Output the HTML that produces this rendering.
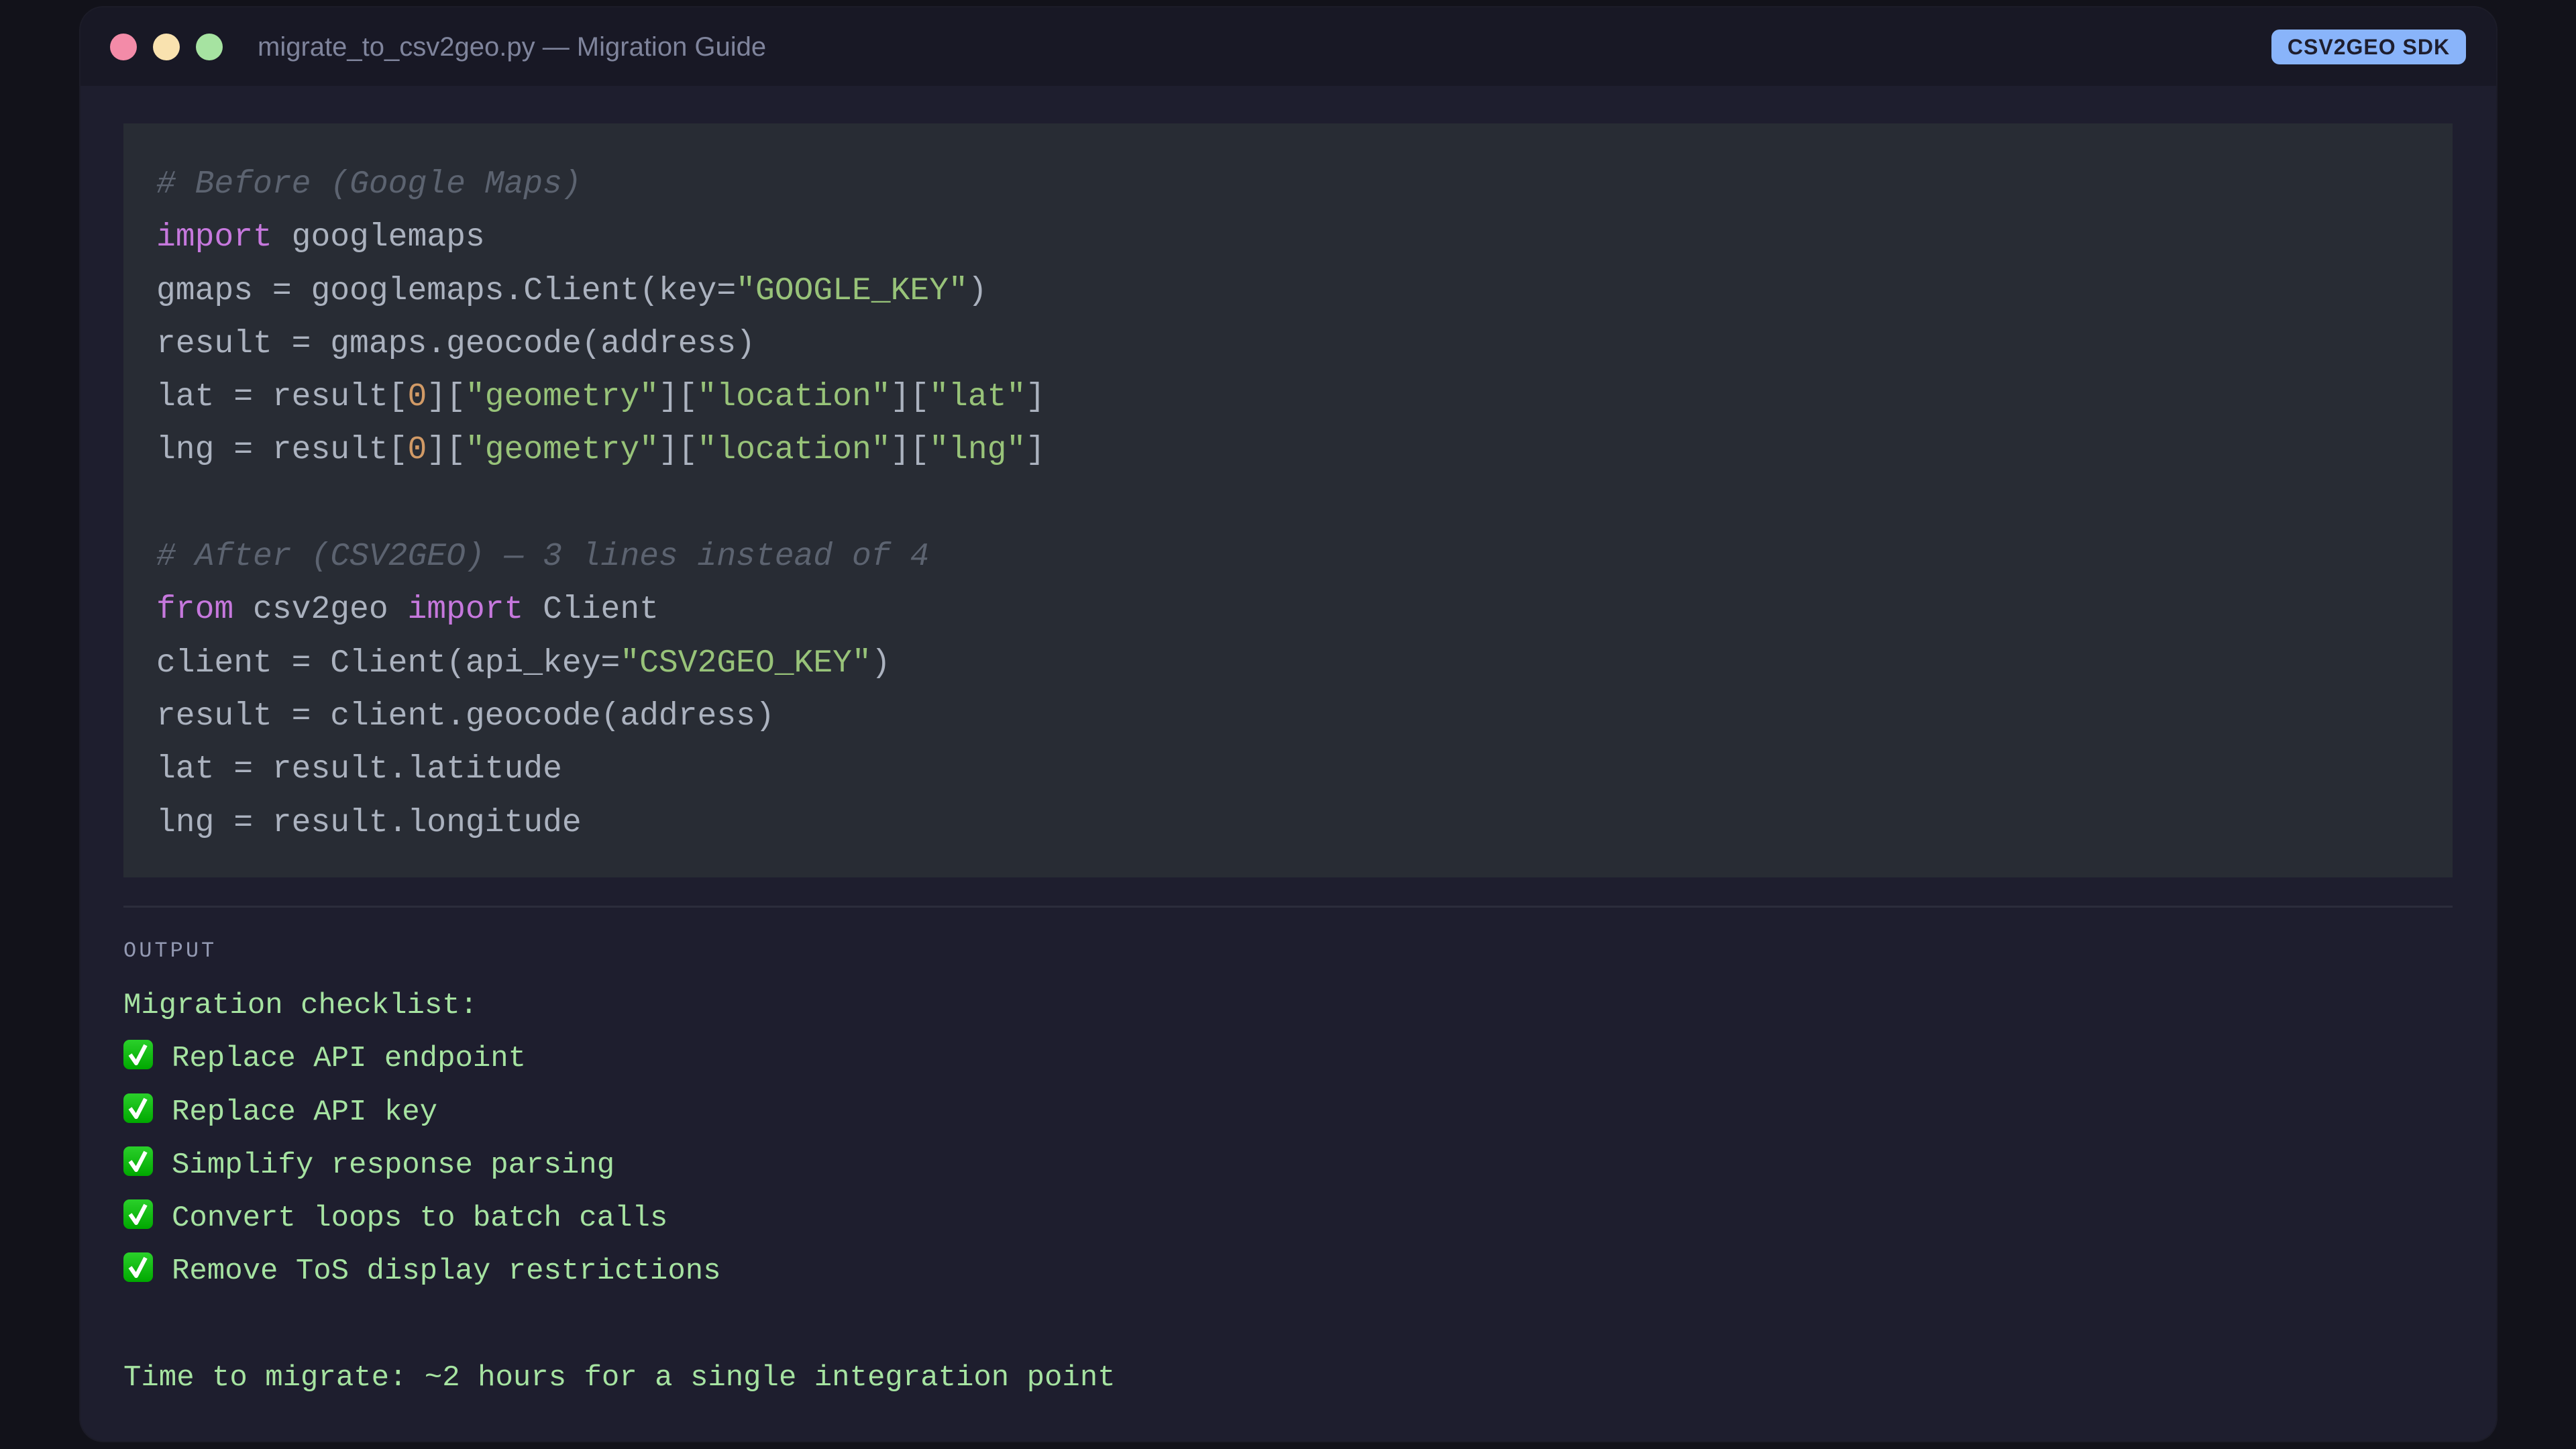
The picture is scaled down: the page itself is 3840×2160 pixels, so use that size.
<!DOCTYPE html>
<html><head><meta charset="utf-8"><style>
*{margin:0;padding:0;box-sizing:border-box}
html,body{width:3840px;height:2160px;overflow:hidden;background:#12121a}
.win{position:absolute;left:120px;top:11px;width:3601px;height:2137px;background:#1e1e2e;border-radius:34px;overflow:hidden;box-shadow:0 0 0 2px #1c1c28}
.hdr{position:absolute;left:0;top:0;width:100%;height:117px;background:#181825}
.dot{position:absolute;top:39px;width:40px;height:40px;border-radius:50%}
.title{position:absolute;left:264px;top:34px;font:40px "Liberation Sans",sans-serif;color:#7f849c;line-height:50px}
.badge{position:absolute;left:3266px;top:33px;width:290px;height:52px;background:#89b4fa;border-radius:12px;color:#1e1e2e;font:bold 32px "Liberation Sans",sans-serif;text-align:center;line-height:52px;letter-spacing:1px}
.code{position:absolute;left:64px;top:173px;width:3472px;height:1124px;background:#282c34;padding:52px 49px;font:48px/79.3px "Liberation Mono",monospace;color:#abb2bf;white-space:pre}
.c{color:#5c6370;font-style:italic}.k{color:#c678dd}.s{color:#98c379}.n{color:#d19a66}
.sep{position:absolute;left:64px;top:1339px;width:3472px;height:3px;background:#2c2d3c}
.olbl{position:absolute;left:64px;top:1388px;font:32px "Liberation Mono",monospace;color:#9399b2;letter-spacing:4px}
.out{position:absolute;left:64px;top:1449px;font:44px/79.3px "Liberation Mono",monospace;color:#a6e3a1;white-space:pre}
.ck{display:inline-block;width:44px;height:44px;border-radius:9px;background:linear-gradient(#2ad02a,#00a800);vertical-align:-5px;position:relative;margin-right:28px}
.ck svg{position:absolute;left:0;top:0}
</style></head><body>
<div class="win">
<div class="hdr">
<div class="dot" style="left:44px;background:#f38ba8"></div>
<div class="dot" style="left:108px;background:#f9e2af"></div>
<div class="dot" style="left:172px;background:#a6e3a1"></div>
<div class="title">migrate_to_csv2geo.py — Migration Guide</div>
<div class="badge">CSV2GEO SDK</div>
</div>
<div class="code"><span class="c"># Before (Google Maps)</span>
<span class="k">import</span> googlemaps
gmaps = googlemaps.Client(key=<span class="s">"GOOGLE_KEY"</span>)
result = gmaps.geocode(address)
lat = result[<span class="n">0</span>][<span class="s">"geometry"</span>][<span class="s">"location"</span>][<span class="s">"lat"</span>]
lng = result[<span class="n">0</span>][<span class="s">"geometry"</span>][<span class="s">"location"</span>][<span class="s">"lng"</span>]

<span class="c"># After (CSV2GEO) — 3 lines instead of 4</span>
<span class="k">from</span> csv2geo <span class="k">import</span> Client
client = Client(api_key=<span class="s">"CSV2GEO_KEY"</span>)
result = client.geocode(address)
lat = result.latitude
lng = result.longitude</div>
<div class="sep"></div>
<div class="olbl">OUTPUT</div>
<div class="out">Migration checklist:
<span class="ck"><svg width="44" height="44" viewBox="0 0 44 44"><path d="M10 22 L19 35 L33 8" stroke="#fff" stroke-width="6" fill="none" stroke-linejoin="round"/></svg></span>Replace API endpoint
<span class="ck"><svg width="44" height="44" viewBox="0 0 44 44"><path d="M10 22 L19 35 L33 8" stroke="#fff" stroke-width="6" fill="none" stroke-linejoin="round"/></svg></span>Replace API key
<span class="ck"><svg width="44" height="44" viewBox="0 0 44 44"><path d="M10 22 L19 35 L33 8" stroke="#fff" stroke-width="6" fill="none" stroke-linejoin="round"/></svg></span>Simplify response parsing
<span class="ck"><svg width="44" height="44" viewBox="0 0 44 44"><path d="M10 22 L19 35 L33 8" stroke="#fff" stroke-width="6" fill="none" stroke-linejoin="round"/></svg></span>Convert loops to batch calls
<span class="ck"><svg width="44" height="44" viewBox="0 0 44 44"><path d="M10 22 L19 35 L33 8" stroke="#fff" stroke-width="6" fill="none" stroke-linejoin="round"/></svg></span>Remove ToS display restrictions

Time to migrate: ~2 hours for a single integration point</div>
</div>
</body></html>
